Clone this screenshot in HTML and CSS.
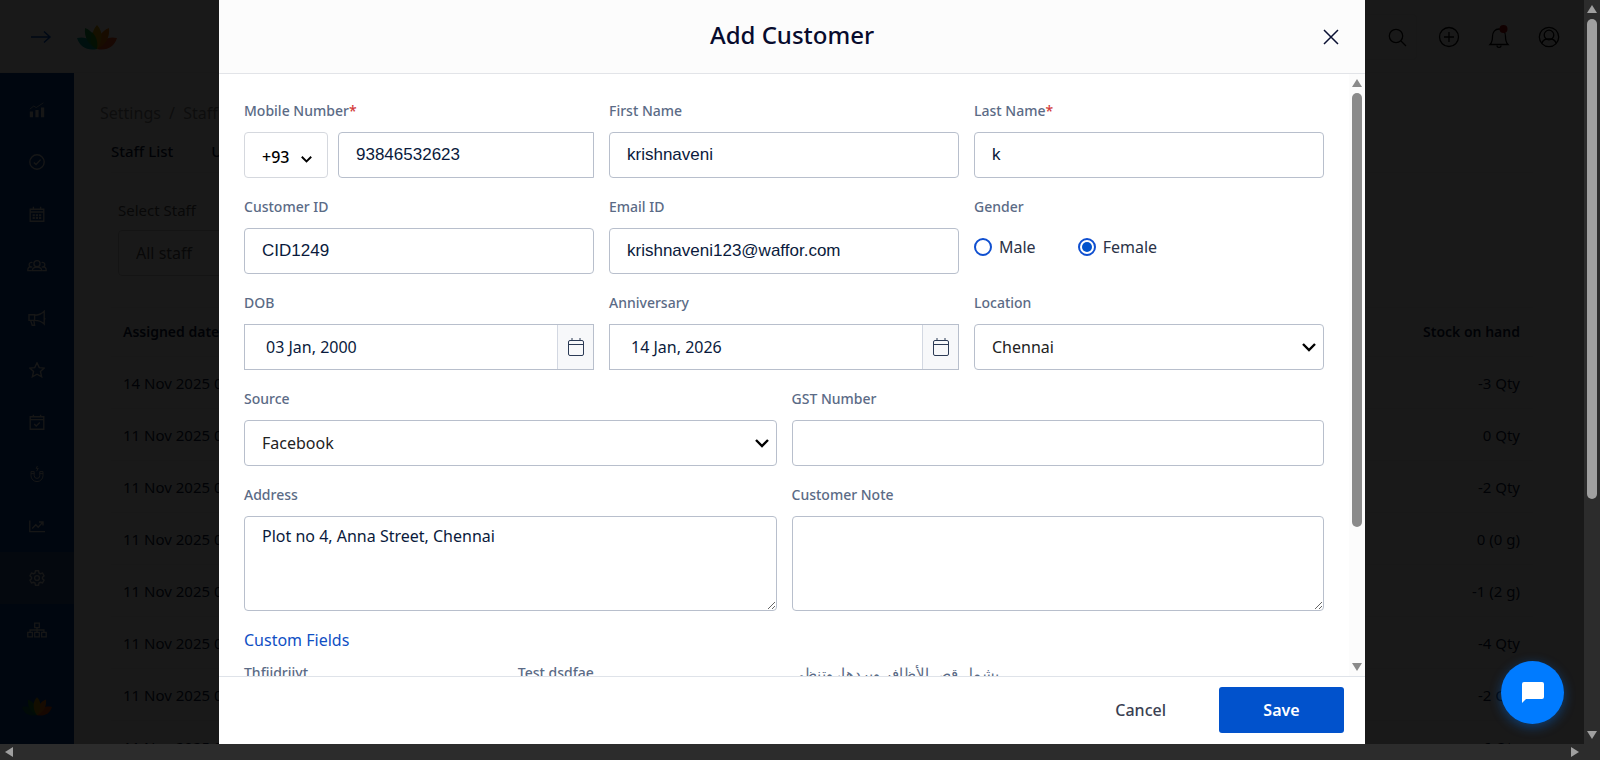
FILE: index.html
```html
<!DOCTYPE html>
<html lang="en">
  <head>
    <meta charset="UTF-8" />
    <meta name="viewport" content="width=device-width, initial-scale=1.0" />
    <title>Add Customer</title>
    <link rel="stylesheet" href="styles.css">
  </head>
  <body>
    <div class="window">
      <div class="app">
        <header class="topbar">
          <button class="icon-btn menu-btn" aria-label="Expand menu">
            <svg width="22" height="14" viewBox="0 0 22 14" fill="none" stroke="#0052cc" stroke-width="1.5">
              <path d="M1 7h19M14 1.5L20 7l-6 5.5" />
            </svg>
          </button>
          <svg class="logo" width="40" height="25" viewBox="0 0 40 25">
            <path d="M0 13c8-2 16 1 20 11C10 26 3 22 0 13z" fill="#00a09a" />
            <path d="M40 13c-8-2-16 1-20 11 10 2 17-2 20-11z" fill="#f4511e" />
            <path d="M8 3c8 3 13 11 12 21C11 20 7 12 8 3z" fill="#16a34a" />
            <path d="M32 3c-8 3-13 11-12 21 9-4 13-12 12-21z" fill="#f57c00" />
            <path d="M20 0c6 6 6 16 0 24-6-8-6-18 0-24z" fill="#d9a400" />
            <path d="M20 24C12 20 13 13 15 7c5 5 6 11 5 17z" fill="#2e9e1f" />
          </svg>
          <div class="topbar-actions">
            <div class="search-box">
              <button class="icon-btn" aria-label="Search">
                <svg width="20" height="20" viewBox="0 0 20 20" fill="none" stroke="#000" stroke-width="1.3">
                  <circle cx="9" cy="9" r="6.700" />
                  <path d="M14 14l5 5" />
                </svg>
              </button>
            </div>
            <button class="icon-btn" aria-label="Add">
              <svg width="22" height="22" viewBox="0 0 22 22" fill="none" stroke="#000" stroke-width="1.3">
                <circle cx="11" cy="11" r="9.500" />
                <path d="M11 6v10M6 11h10" />
              </svg>
            </button>
            <button class="icon-btn" aria-label="Notifications">
              <svg width="22" height="24" viewBox="0 0 22 24" fill="none" stroke="#000" stroke-width="1.3">
                <path d="M2 19.500c2-2 2.500-4 2.500-8C4.500 7 7 4 11 4s6.500 3 6.500 7.500c0 4 .5 6 2.500 8z" />
                <path d="M9 20.500c0 2.500 4 2.500 4 0" />
                <circle cx="15.500" cy="4" r="4" fill="#a00" stroke="none" />
              </svg>
            </button>
            <button class="icon-btn" aria-label="Account">
              <svg width="22" height="22" viewBox="0 0 22 22" fill="none" stroke="#000" stroke-width="1.3">
                <circle cx="11" cy="11" r="9.700" />
                <circle cx="11" cy="9" r="4.800" />
                <path d="M4 17.500c.5-3 2.500-4 4.500-4.500h5c2 .5 4 1.500 4.500 4.500" />
              </svg>
            </button>
          </div>
        </header>

        <div class="app-body">
          <nav class="sidebar">
            <a href="#" aria-label="Dashboard">
              <svg viewBox="0 0 20 20"><path d="M3 12v7M10 10v9M17 7v12" stroke-width="4" /><path d="M1 9l5-4 3 2 9-6" stroke-width="1" /></svg>
            </a>
            <a href="#" aria-label="Tasks">
              <svg viewBox="0 0 20 20"><circle cx="10" cy="10" r="9" /><path d="M6 10.500l2.800 2.700L14.500 7" /></svg>
            </a>
            <a href="#" aria-label="Calendar">
              <svg viewBox="0 0 20 20"><path d="M1.500 4h17v15h-17zM2 7.500h16M5.500 1v4M14.500 1v4" /><path d="M4.500 11.500h11M4.500 15h11" stroke-width="2.500" stroke-dasharray="2.800 1.200" /></svg>
            </a>
            <a href="#" aria-label="Customers">
              <svg class="wide" viewBox="0 0 26 20"><circle cx="13" cy="7" r="4" /><path d="M7 16c0-6 12-6 12 0zM7 5.500a3 3 0 1 0 0 5.500M19 5.500a3 3 0 1 1 0 5.500M6 16H1c0-3 1-5 4-5M20 16h5c0-3-1-5-4-5" /></svg>
            </a>
            <a href="#" aria-label="Marketing">
              <svg class="wide" viewBox="0 0 24 20"><path d="M2 6h7v7H2zM9 6.500c5 0 9-2 12-5v16c-3-3-7-4.500-12-4.500M4 13l2 6h3l-1-6M21 8v3h1.500" /></svg>
            </a>
            <a href="#" aria-label="Reviews">
              <svg viewBox="0 0 20 20"><path d="M10 1l2.800 6 6.200.6-4.700 4.300 1.500 6.600L10 15.200l-5.800 3.300 1.500-6.600L1 7.600 7.200 7z" /></svg>
            </a>
            <a href="#" aria-label="Bookings">
              <svg viewBox="0 0 20 20"><path d="M1.500 3.500h17v15.500h-17zM2 7h16M5.500 1v3M14.500 1v3M6.500 12.500l2.500 2.500 4.500-4.500" /></svg>
            </a>
            <a href="#" aria-label="Leads">
              <svg viewBox="0 0 20 20"><path d="M2.500 7h4v5a3.500 3.500 0 0 0 7 0V7h4v5a7.500 7.500 0 0 1-15 0zM2.500 9.500h4M13.500 9.500h4M10.500 0L9 3h2.500L9.500 6.500" stroke-width="1.200" /></svg>
            </a>
            <a href="#" aria-label="Reports">
              <svg viewBox="0 0 20 20"><path d="M1 3v14h19M4 13l4.500-4.500 3 3L17 5.500M12.500 5H17.500v4.500" /></svg>
            </a>
            <a href="#" class="active" aria-label="Settings">
              <svg viewBox="0 0 20 20"><circle cx="10" cy="10" r="3" /><path d="M8.100 1h3.800l.6 2.700 1.700 1 2.700-.9 1.900 3.400-2 1.900v1.800l2 1.900-1.900 3.400-2.700-.9-1.700 1-.6 2.700H8.100l-.6-2.700-1.700-1-2.700.9-1.900-3.400 2-1.900V9.100l-2-1.900 1.900-3.400 2.700.9 1.700-1z" /></svg>
            </a>
            <a href="#" aria-label="Branches">
              <svg class="wide" viewBox="0 0 26 20"><path d="M10 1h6v6h-6zM1 13h6v6H1zM10 13h6v6h-6zM19 13h6v6h-6zM13 7v6M4 13v-3h18v3" /></svg>
            </a>
            <svg class="side-logo" viewBox="0 0 40 25">
              <path d="M0 13c8-2 16 1 20 11C10 26 3 22 0 13z" fill="#0a6b50" />
              <path d="M40 13c-8-2-16 1-20 11 10 2 17-2 20-11z" fill="#d9480f" />
              <path d="M8 3c8 3 13 11 12 21C11 20 7 12 8 3z" fill="#16803a" />
              <path d="M32 3c-8 3-13 11-12 21 9-4 13-12 12-21z" fill="#e8750a" />
              <path d="M20 0c6 6 6 16 0 24-6-8-6-18 0-24z" fill="#c09000" />
            </svg>
          </nav>

          <main class="content">
            <p class="breadcrumb"><a href="#">Settings</a> <span>/</span> <a href="#">Staff</a></p>
            <div class="tabs">
              <a href="#">Staff List</a>
              <a href="#">Users</a>
            </div>
            <div class="filter">
              <label for="staff">Select Staff</label>
              <select id="staff"><option>All staff</option></select>
            </div>
            <table class="stock">
              <thead>
                <tr><th>Assigned date</th><th>Stock on hand</th></tr>
              </thead>
              <tbody>
                <tr><td>14 Nov 2025 0</td><td>-3 Qty</td></tr>
                <tr><td>11 Nov 2025 0</td><td>0 Qty</td></tr>
                <tr><td>11 Nov 2025 0</td><td>-2 Qty</td></tr>
                <tr><td>11 Nov 2025 0</td><td>0 (0 g)</td></tr>
                <tr><td>11 Nov 2025 0</td><td>-1 (2 g)</td></tr>
                <tr><td>11 Nov 2025 0</td><td>-4 Qty</td></tr>
                <tr><td>11 Nov 2025 0</td><td>-2 Qty</td></tr>
                <tr><td>11 Nov 2025 0</td><td>-6 Qty</td></tr>
              </tbody>
            </table>
          </main>
        </div>

        <div class="overlay">
          <form class="modal" role="dialog" aria-labelledby="modal-title">
            <div class="modal-header">
              <h1 id="modal-title">Add Customer</h1>
              <button type="button" class="close-btn" aria-label="Close">
                <svg width="16" height="16" viewBox="0 0 16 16" fill="none" stroke="#0a1033" stroke-width="1.5">
                  <path d="M1 1l14 14M15 1L1 15" />
                </svg>
              </button>
            </div>

            <div class="modal-main">
              <div class="modal-body">
                <div class="row three">
                  <div class="field">
                    <label for="mobile">Mobile Number<span class="req">*</span></label>
                    <div class="phone">
                      <select class="code" aria-label="Country code"><option>+93</option></select>
                      <input id="mobile" type="tel" value="93846532623" />
                    </div>
                  </div>
                  <div class="field">
                    <label for="first">First Name</label>
                    <input id="first" type="text" value="krishnaveni" />
                  </div>
                  <div class="field">
                    <label for="last">Last Name<span class="req">*</span></label>
                    <input id="last" type="text" value="k" />
                  </div>
                  <div class="field">
                    <label for="cid">Customer ID</label>
                    <input id="cid" type="text" value="CID1249" />
                  </div>
                  <div class="field">
                    <label for="email">Email ID</label>
                    <input id="email" type="email" value="krishnaveni123@waffor.com" />
                  </div>
                  <div class="field" role="radiogroup" aria-labelledby="gender">
                    <span class="label" id="gender">Gender</span>
                    <div class="radios">
                      <label><input type="radio" name="gender" />Male</label>
                      <label><input type="radio" name="gender" checked />Female</label>
                    </div>
                  </div>
                  <div class="field">
                    <label for="dob">DOB</label>
                    <div class="date">
                      <input id="dob" type="text" value="03 Jan, 2000" />
                      <button type="button" aria-label="Pick date of birth">
                        <svg width="16" height="18" viewBox="0 0 16 18" fill="none" stroke="#2b3a55">
                          <rect x=".5" y="2.500" width="15" height="15" rx="1.500" />
                          <path d="M.5 6.500h15M4 0v3M12 0v3" />
                        </svg>
                      </button>
                    </div>
                  </div>
                  <div class="field">
                    <label for="anniversary">Anniversary</label>
                    <div class="date">
                      <input id="anniversary" type="text" value="14 Jan, 2026" />
                      <button type="button" aria-label="Pick anniversary">
                        <svg width="16" height="18" viewBox="0 0 16 18" fill="none" stroke="#2b3a55">
                          <rect x=".5" y="2.500" width="15" height="15" rx="1.500" />
                          <path d="M.5 6.500h15M4 0v3M12 0v3" />
                        </svg>
                      </button>
                    </div>
                  </div>
                  <div class="field">
                    <label for="location">Location</label>
                    <select id="location"><option>Chennai</option></select>
                  </div>
                </div>

                <div class="row two">
                  <div class="field">
                    <label for="source">Source</label>
                    <select id="source"><option>Facebook</option></select>
                  </div>
                  <div class="field">
                    <label for="gst">GST Number</label>
                    <input id="gst" type="text" />
                  </div>
                  <div class="field">
                    <label for="address">Address</label>
                    <textarea id="address">Plot no 4, Anna Street, Chennai</textarea>
                  </div>
                  <div class="field">
                    <label for="note">Customer Note</label>
                    <textarea id="note"></textarea>
                  </div>
                </div>

                <h2 class="section-title">Custom Fields</h2>
                <div class="row four">
                  <div class="field">
                    <label for="custom1">Thfijdrjjyt</label>
                    <input id="custom1" type="text" />
                  </div>
                  <div class="field">
                    <label for="custom2">Test dsdfae</label>
                    <input id="custom2" type="text" />
                  </div>
                  <div class="field">
                    <label for="custom3" lang="ar">يشمل قص الأظافر وبردها، وتنظي</label>
                    <input id="custom3" type="text" />
                  </div>
                </div>
              </div>
              <div class="scrollbar light" aria-hidden="true">
                <i class="arrow up"></i>
                <div class="track"><div class="thumb"></div></div>
                <i class="arrow down"></i>
              </div>
            </div>

            <div class="modal-footer">
              <button type="button" class="cancel-btn">Cancel</button>
              <button type="submit" class="save-btn">Save</button>
            </div>
          </form>
        </div>

        <button class="chat-btn" aria-label="Open chat">
          <svg width="22" height="21" viewBox="0 0 22 21">
            <path d="M2 0h18a2 2 0 0 1 2 2v13a2 2 0 0 1-2 2H4l-4 4V2a2 2 0 0 1 2-2z" fill="#fff" />
          </svg>
        </button>
      </div>

      <div class="scrollbar dark" aria-hidden="true">
        <i class="arrow up"></i>
        <div class="track"><div class="thumb"></div></div>
        <i class="arrow down"></i>
      </div>
      <div class="hscroll" aria-hidden="true">
        <i class="arrow left"></i>
        <i class="arrow right"></i>
      </div>
    </div>
  </body>
</html>
```
FILE: styles.css
```css
* {
  box-sizing: border-box;
}
body {
  margin: 0;
  font-family: "Noto Sans", "Open Sans", sans-serif;
  font-size: 15px;
  line-height: 24px;
  color: #0a1a3c;
}
button,
input,
select,
textarea {
  font: inherit;
  color: inherit;
}
button {
  padding: 0;
  border: none;
  background: none;
  cursor: pointer;
}
a {
  color: inherit;
  text-decoration: none;
}
svg {
  display: block;
}

/* browser window with its scrollbars */
.window {
  display: grid;
  grid-template-columns: minmax(0, 1fr) 16px;
  grid-template-rows: minmax(0, 1fr) 16px;
  height: 100vh;
  overflow: hidden;
  background: #2c2c2c;
}
.app {
  position: relative;
  display: flex;
  flex-direction: column;
  overflow: hidden;
  background: #fff;
}

/* page behind the dialog */
.topbar {
  display: flex;
  align-items: center;
  flex: none;
  height: 73px;
  padding: 2px 24px 0 30px;
  border-bottom: 1px solid #eee;
}
.logo {
  margin-left: 25px;
}
.topbar-actions {
  display: flex;
  align-items: center;
  gap: 28px;
  margin-left: auto;
}
.search-box {
  display: flex;
  justify-content: flex-end;
  align-items: center;
  width: 300px;
  height: 46px;
  margin-right: -7px;
  padding-right: 9px;
  border: 1px solid #eee;
  border-radius: 4px;
}
.app-body {
  display: flex;
  flex: 1;
  min-height: 0;
}
.sidebar {
  display: flex;
  flex-direction: column;
  flex: none;
  width: 74px;
  padding: 11px 0 28px;
  background: #003c96;
}
.sidebar a {
  display: flex;
  align-items: center;
  justify-content: center;
  height: 52px;
}
.sidebar a.active {
  background: #2f5590;
}
.sidebar a svg {
  width: 16px;
  height: 16px;
  fill: none;
  stroke: #ddd;
  stroke-width: 1.7;
}
.sidebar a svg.wide {
  width: 20px;
}
.sidebar .side-logo {
  width: 30px;
  height: 19px;
  margin: auto auto 0;
}
.content {
  flex: 1;
  min-width: 0;
  padding: 28px 51px 0 37px;
}
.breadcrumb {
  margin: 0 0 14px -11px;
  font-size: 16px;
  color: #888;
}
.breadcrumb span {
  margin: 0 4px;
}
.tabs {
  display: flex;
  gap: 38px;
  height: 34px;
  border-bottom: 1px solid #eee;
  font-weight: 500;
}
.filter {
  display: flex;
  flex-direction: column;
  align-items: flex-start;
  gap: 8px;
  padding: 25px 7px 31px;
  color: #555;
}
.filter select {
  width: 300px;
  height: 46px;
  padding: 0 17px;
  border: 1px solid #ccc;
  border-radius: 4px;
  background: #fff;
  font-size: 16px;
  appearance: none;
}
.stock {
  width: 100%;
  border-collapse: collapse;
  border-top: 1px solid #eee;
}
.stock th,
.stock td {
  height: 52px;
  padding: 0 13px 0 12px;
  border-bottom: 1px solid #eee;
  text-align: left;
}
.stock th {
  height: 49px;
  font-size: 14px;
  font-weight: 600;
}
.stock th:last-child,
.stock td:last-child {
  text-align: right;
}

/* dialog */
.overlay {
  position: absolute;
  inset: 0;
  display: flex;
  justify-content: center;
  background: rgba(0, 0, 0, 0.9);
}
.modal {
  display: flex;
  flex-direction: column;
  width: 100%;
  max-width: 1146px;
  background: #fff;
}
.modal-header {
  display: grid;
  grid-template-columns: 1fr auto 1fr;
  align-items: center;
  flex: none;
  height: 74px;
  padding: 0 26px;
  border-bottom: 1px solid #e2e4e8;
  background: #fcfcfc;
}
.modal-header h1 {
  grid-column: 2;
  margin: 0;
  padding-bottom: 3px;
  font-size: 24px;
  font-weight: 500;
  line-height: 32px;
  color: #070b2d;
}
.close-btn {
  justify-self: end;
}
.modal-main {
  display: flex;
  flex: 1;
  min-height: 0;
}
.modal-body {
  flex: 1;
  min-width: 0;
  padding: 25px 25px 26px;
  overflow: hidden;
}
.row {
  display: grid;
  gap: 17px 15px;
  margin-bottom: 17px;
}
.three {
  grid-template-columns: repeat(3, minmax(0, 1fr));
}
.two {
  grid-template-columns: repeat(2, minmax(0, 1fr));
}
.four {
  grid-template-columns: repeat(4, minmax(0, 1fr));
}
.field {
  display: flex;
  flex-direction: column;
  gap: 9px;
  min-width: 0;
}
.field > label,
.label {
  font-size: 14px;
  font-weight: 500;
  color: #5b6b86;
  white-space: nowrap;
}
.field > label:lang(ar) {
  font-size: 15px;
}
.req {
  color: #d33a3a;
}
.field input,
.field select,
.field textarea {
  width: 100%;
  height: 46px;
  padding: 0 17px;
  border: 1px solid #b8bfcc;
  border-radius: 4px;
  background: #fff;
  font-size: 16px;
}
.field input {
  font-family: "Liberation Sans", Arial, sans-serif;
  font-size: 17px;
}
.field select {
  appearance: none;
  color: #222;
  background: #fff url("data:image/svg+xml,%3Csvg xmlns='http://www.w3.org/2000/svg' width='14' height='9' fill='none' stroke='%23000' stroke-width='2.4'%3E%3Cpath d='M1 1l6 6 6-6'/%3E%3C/svg%3E") no-repeat right 7px center;
}
.field textarea {
  display: block;
  height: 95px;
  padding: 7px 17px;
}
.phone {
  display: flex;
  gap: 10px;
}
.phone .code {
  flex: none;
  width: 84px;
  padding-top: 4px;
  border-color: #d5d8de;
  font-weight: 500;
  color: #000;
  background-position: right 15px top 23px;
  background-size: 11px;
}
.phone input {
  flex: 1;
  min-width: 0;
  border-radius: 4px 0 0 4px;
}
.date {
  display: flex;
  height: 46px;
  border: 1px solid #b8bfcc;
}
.field .date input {
  flex: 1;
  height: 100%;
  min-width: 0;
  padding: 0 21px;
  border: none;
  border-radius: 0;
  font-family: inherit;
  font-size: 16px;
}
.date button {
  display: flex;
  align-items: center;
  justify-content: center;
  flex: none;
  width: 36px;
  border-left: 1px solid #d3d8e2;
  background: #f7f8fa;
}
.radios {
  display: flex;
  gap: 42px;
  padding-top: 7px;
}
.radios label {
  display: flex;
  align-items: center;
  gap: 7px;
  font-size: 16px;
  color: #2b3347;
}
.field .radios input {
  display: grid;
  place-content: center;
  width: 18px;
  height: 18px;
  margin: 0;
  padding: 0;
  border: 2px solid #0f4fd0;
  border-radius: 50%;
  appearance: none;
}
.radios input:checked::before {
  content: "";
  width: 10px;
  height: 10px;
  border-radius: 50%;
  background: #0152cc;
}
.section-title {
  margin: 0 0 9px;
  font-size: 16px;
  font-weight: 400;
  line-height: 24px;
  color: #0f4fc4;
}
.modal-footer {
  display: flex;
  align-items: center;
  justify-content: flex-end;
  flex: none;
  gap: 53px;
  height: 68px;
  padding: 0 21px 2px;
  border-top: 1px solid #dfe3e9;
}
.cancel-btn {
  font-size: 16px;
  font-weight: 500;
  color: #3a3f52;
}
.save-btn {
  width: 125px;
  height: 46px;
  border-radius: 3px;
  background: #0152cc;
  font-size: 16px;
  font-weight: 600;
  color: #fff;
}

.chat-btn {
  position: absolute;
  right: 20px;
  bottom: 20px;
  display: flex;
  align-items: center;
  justify-content: center;
  width: 63px;
  height: 63px;
  border-radius: 50%;
  background: #007bff;
  box-shadow: 0 3px 12px rgba(0, 123, 255, 0.4);
}

/* scrollbars */
.scrollbar {
  display: flex;
  flex-direction: column;
  align-items: center;
  flex: none;
  width: 16px;
  padding: 5px 0;
  color: #8b8b8b;
}
.light {
  background: #fcfcfc;
}
.dark {
  color: #9f9f9f;
}
.track {
  flex: 1;
  padding: 6px 0;
}
.thumb {
  width: 10px;
  height: 77%;
  border-radius: 5px;
  background: currentColor;
}
.dark .thumb {
  height: 68%;
}
.arrow {
  width: 10px;
  height: 8px;
  background: currentColor;
}
.up {
  clip-path: polygon(50% 0, 100% 100%, 0 100%);
}
.down {
  clip-path: polygon(0 0, 100% 0, 50% 100%);
}
.hscroll {
  display: flex;
  align-items: center;
  justify-content: space-between;
  padding: 0 5px;
  color: #9f9f9f;
}
.left,
.right {
  width: 8px;
  height: 10px;
}
.left {
  clip-path: polygon(100% 0, 100% 100%, 0 50%);
}
.right {
  clip-path: polygon(0 0, 100% 50%, 0 100%);
}
```
